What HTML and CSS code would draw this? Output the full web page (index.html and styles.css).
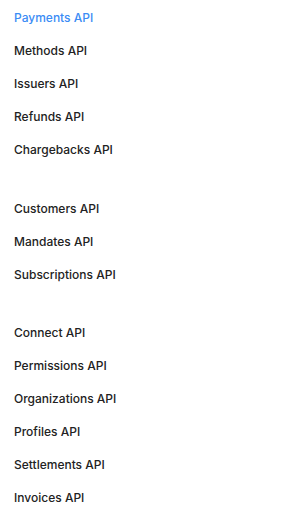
FILE: index.html
```html
<!DOCTYPE html>
<html lang="en">
<head>
    <meta charset="UTF-8">
    <meta name="viewport" content="width=device-width, initial-scale=1.0">
    <title>API Reference</title>
    <link rel="stylesheet" href="styles.css">
</head>
<body>

    <nav class="sidebar">
        <!-- Payments -->
        <ul class="group">
            <li><a href="#" class="active">Payments API</a></li>
            <li><a href="#">Methods API</a></li>
            <li><a href="#">Issuers API</a></li>
            <li><a href="#">Refunds API</a></li>
            <li><a href="#">Chargebacks API</a></li>
        </ul>

        <!-- Recurring -->
        <ul class="group">
            <li><a href="#">Customers API</a></li>
            <li><a href="#">Mandates API</a></li>
            <li><a href="#">Subscriptions API</a></li>
        </ul>

        <!-- Connect -->
        <ul class="group">
            <li><a href="#">Connect API</a></li>
            <li><a href="#">Permissions API</a></li>
            <li><a href="#">Organizations API</a></li>
            <li><a href="#">Profiles API</a></li>
            <li><a href="#">Settlements API</a></li>
            <li><a href="#">Invoices API</a></li>
        </ul>
    </nav>

</body>
</html>
```

FILE: styles.css
```css
body {
    margin: 0;
    background: #fff;
    font-family: Inter, "Noto Sans", sans-serif;
}
.sidebar {
    padding: 0 14px;
}
.group {
    list-style: none;
    margin: 0 0 25.5px 0;
    padding: 0;
}
.group li {
    height: 33px;
    line-height: 33px;
}
.group a {
    color: #222;
    font-size: 12px;
    font-weight: 500;
    text-decoration: none;
}
.group a.active {
    color: #3b8cf5;
}
```
